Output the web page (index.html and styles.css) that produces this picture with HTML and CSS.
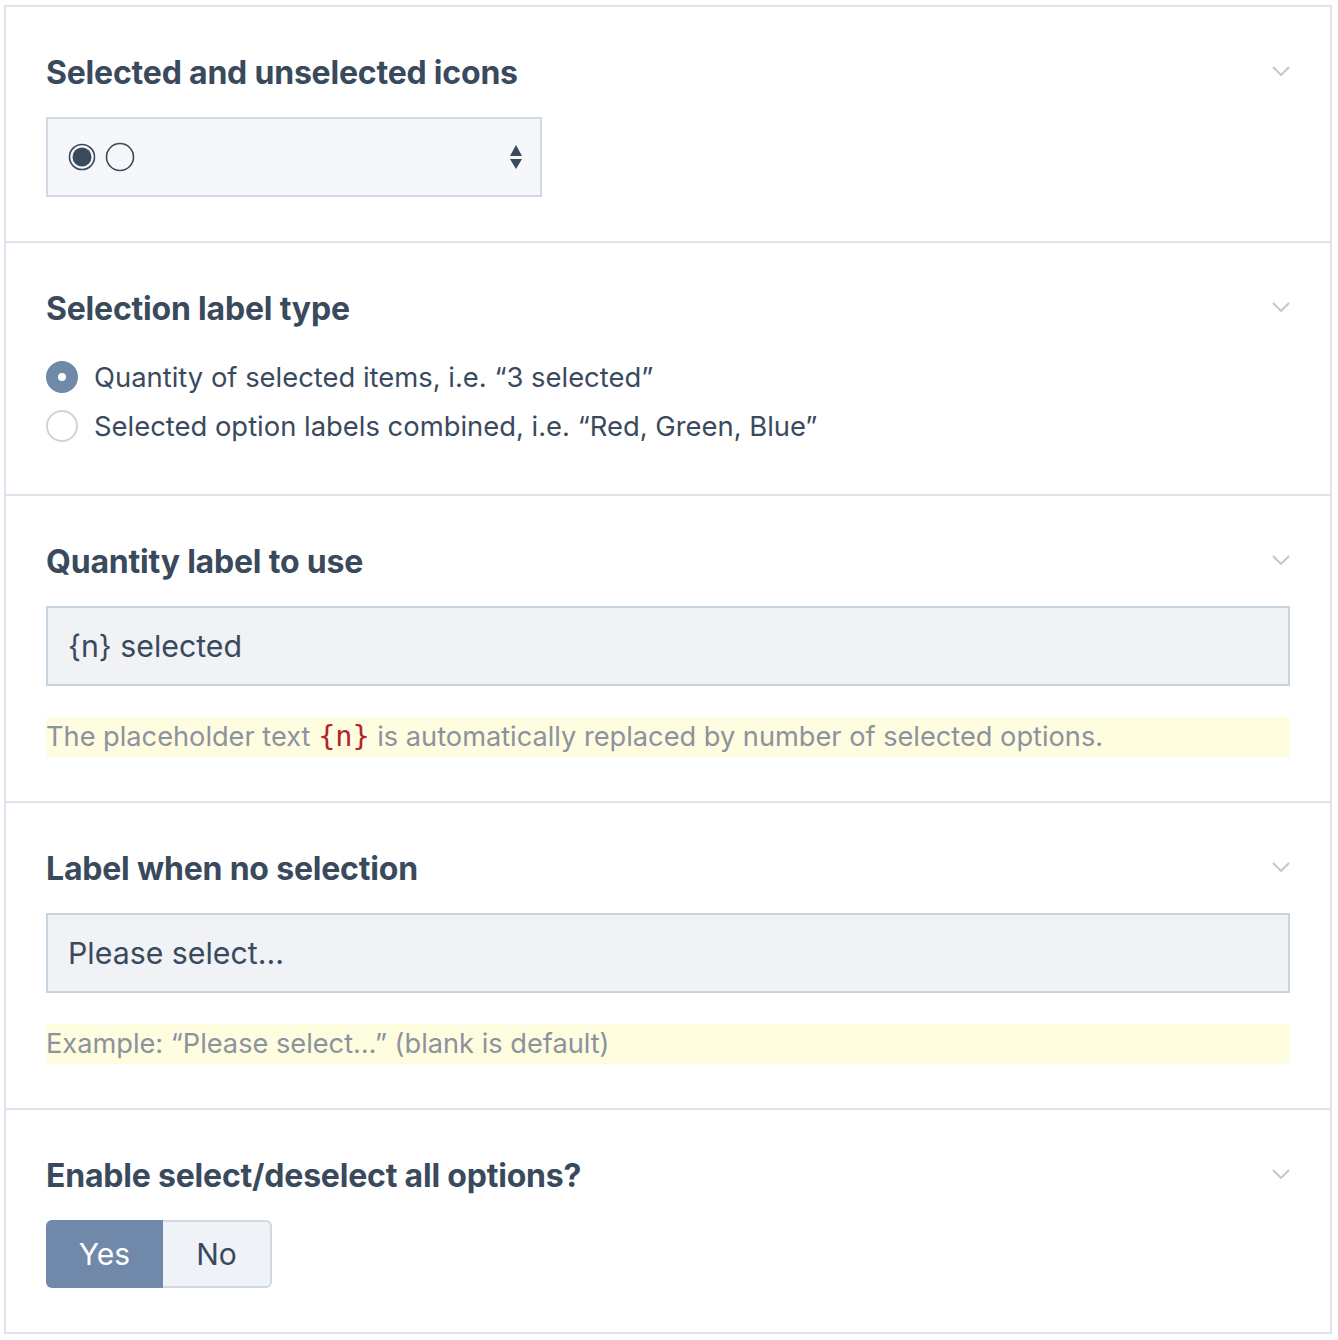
FILE: index.html
```html
<!DOCTYPE html>
<html lang="en">
<head>
<meta charset="utf-8">
<title>Settings</title>
<link rel="stylesheet" href="styles.css">
</head>
<body>
<div class="panel">
  <section class="field">
    <div class="field-head">
      <h2 class="field-title">Selected and unselected icons</h2>
      <svg class="chev" viewBox="0 0 18 10" width="18" height="10"><path d="M1 1 L9 9 L17 1" fill="none" stroke="#c3c7cf" stroke-width="2"/></svg>
    </div>
    <div class="select">
      <span class="select-icons">
        <svg viewBox="0 0 30 30" width="30" height="30"><circle cx="15" cy="15" r="12.5" fill="none" stroke="#3a4a5d" stroke-width="1.6"/><circle cx="15" cy="15" r="9.5" fill="#3a4a5d"/></svg>
        <svg viewBox="0 0 30 30" width="30" height="30"><circle cx="15" cy="15" r="13.5" fill="none" stroke="#3a4a5d" stroke-width="1.6"/></svg>
      </span>
      <svg class="updown" viewBox="0 0 14 26" width="14" height="26"><path d="M7 1 L13 12 L1 12 Z M1 15 L13 15 L7 25 Z" fill="#3a4a5d"/></svg>
    </div>
  </section>

  <section class="field">
    <div class="field-head">
      <h2 class="field-title">Selection label type</h2>
      <svg class="chev" viewBox="0 0 18 10" width="18" height="10"><path d="M1 1 L9 9 L17 1" fill="none" stroke="#c3c7cf" stroke-width="2"/></svg>
    </div>
    <div class="radios">
      <label class="radio"><span class="dot on"></span>Quantity of selected items, i.e. “3 selected”</label>
      <label class="radio"><span class="dot"></span>Selected option labels combined, i.e. “Red, Green, Blue”</label>
    </div>
  </section>

  <section class="field">
    <div class="field-head">
      <h2 class="field-title">Quantity label to use</h2>
      <svg class="chev" viewBox="0 0 18 10" width="18" height="10"><path d="M1 1 L9 9 L17 1" fill="none" stroke="#c3c7cf" stroke-width="2"/></svg>
    </div>
    <div class="input">{n} selected</div>
    <p class="help">The placeholder text <code class="tok">{n}</code> is automatically replaced by number of selected options.</p>
  </section>

  <section class="field">
    <div class="field-head">
      <h2 class="field-title">Label when no selection</h2>
      <svg class="chev" viewBox="0 0 18 10" width="18" height="10"><path d="M1 1 L9 9 L17 1" fill="none" stroke="#c3c7cf" stroke-width="2"/></svg>
    </div>
    <div class="input">Please select...</div>
    <p class="help">Example: “Please select…” (blank is default)</p>
  </section>

  <section class="field">
    <div class="field-head">
      <h2 class="field-title">Enable select/deselect all options?</h2>
      <svg class="chev" viewBox="0 0 18 10" width="18" height="10"><path d="M1 1 L9 9 L17 1" fill="none" stroke="#c3c7cf" stroke-width="2"/></svg>
    </div>
    <div class="toggle">
      <span class="tbtn yes">Yes</span>
      <span class="tbtn no">No</span>
    </div>
  </section>
</div>
</body>
</html>
```

FILE: styles.css
```css
html, body {
  margin: 0;
  padding: 0;
  background: #ffffff;
}
body {
  font-family: Inter, "Noto Sans", "Liberation Sans", sans-serif;
  color: #3a4a5d;
}
.panel {
  margin: 5px 0 0 4px;
  width: 1324px;
  border: 2px solid #dfe4ec;
  border-bottom: none;
}
.field {
  padding: 48px 40px 44px 40px;
  border-bottom: 2px solid #dfe4ec;
}
.field-head {
  display: flex;
  align-items: center;
  justify-content: space-between;
  height: 36px;
  margin-bottom: 26px;
}
.field-title {
  margin: 0;
  font-size: 32px;
  line-height: 36px;
  font-weight: 700;
  color: #3a4a5d;
  letter-spacing: -0.2px;
}
.chev {
  display: block;
  margin-right: 0;
  margin-top: -4px;
}
.select {
  box-sizing: border-box;
  width: 496px;
  height: 80px;
  background: #f5f7fa;
  border: 2px solid #cfd9e4;
  display: flex;
  align-items: center;
  justify-content: space-between;
  padding: 0 17px 0 19px;
}
.select-icons {
  display: flex;
  gap: 8px;
}
.select-icons svg { display: block; }
.updown { display: block; }
.radios {
  display: flex;
  flex-direction: column;
  gap: 1px;
}
.radio {
  display: flex;
  align-items: center;
  height: 48px;
  font-size: 27.4px;
  color: #3a4a5d;
}
.dot {
  box-sizing: border-box;
  width: 32px;
  height: 32px;
  border-radius: 50%;
  border: 2px solid #d2d2d2;
  background: #fff;
  margin-right: 16px;
  flex: none;
}
.dot.on {
  border: 12px solid #6f89a9;
  background: #ffffff;
}
.input {
  box-sizing: border-box;
  height: 80px;
  background: #f0f2f6;
  border: 2px solid #c8d3e0;
  display: flex;
  align-items: center;
  padding: 0 20px;
  font-size: 30.3px;
  color: #3a4a5d;
}
.help {
  margin: 31px 0 0 0;
  height: 40px;
  line-height: 40px;
  background: #fefde0;
  color: #8c929e;
  font-size: 27.2px;
}
.tok {
  font-family: "DejaVu Sans Mono", "Liberation Mono", monospace;
  color: #b1232e;
  font-size: 28.5px;
}
.toggle {
  display: flex;
}
.tbtn {
  box-sizing: border-box;
  height: 68px;
  display: flex;
  align-items: center;
  justify-content: center;
  font-size: 30px;
}
.tbtn.yes {
  width: 117px;
  background: #7089aa;
  color: #ffffff;
  border-radius: 6px 0 0 6px;
}
.tbtn.no {
  width: 109px;
  background: #eff2f6;
  color: #3a4a5d;
  border: 2px solid #cfd9e4;
  border-left: none;
  border-radius: 0 6px 6px 0;
}
```
